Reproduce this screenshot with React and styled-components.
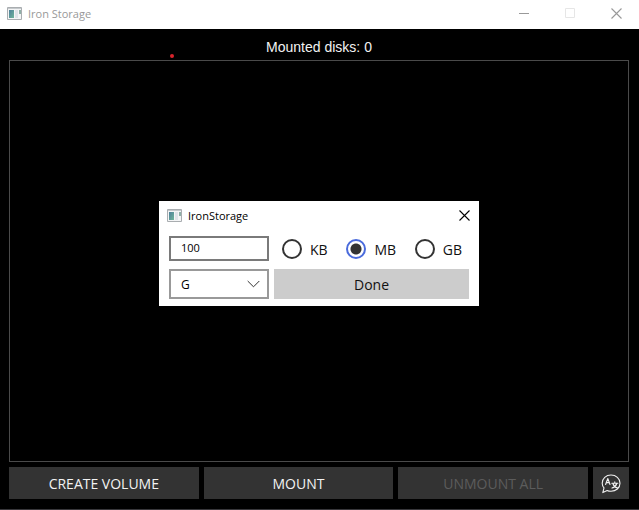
import React, { useState } from "react";
import styled, { createGlobalStyle } from "styled-components";

const GlobalStyle = createGlobalStyle`
  *, *::before, *::after { box-sizing: border-box; }
  body { margin: 0; background: #000; font-family: "Open Sans", "Noto Sans", sans-serif; }
  button, input, select { font-family: inherit; }
`;

const Window = styled.div`
  position: relative;
  display: flex;
  flex-direction: column;
  min-height: 100vh;
  background: #000;
  border-bottom: 1px solid #38373b;
`;

const TitleBar = styled.header`
  display: flex;
  align-items: center;
  height: ${(p) => (p.$dialog ? 28 : 29)}px;
  padding: ${(p) => (p.$dialog ? "0 9px 0 8px" : "0 0 3px 7px")};
  background: #fff;
  color: ${(p) => (p.$dialog ? "#000" : "#999")};
`;

const Title = styled.h1`
  flex: 1;
  margin: 0 0 0 6px;
  padding-top: 2px;
  font-size: 11px;
  line-height: 16px;
  font-weight: 400;
`;

const CaptionButton = styled.button`
  display: grid;
  place-items: center;
  width: ${(p) => (p.$compact ? 12 : 46)}px;
  height: 26px;
  padding: 0;
  border: 0;
  background: transparent;
  color: inherit;
  &:disabled { color: #e6e6e6; }
`;

const Content = styled.main`
  flex: 1;
  display: flex;
  flex-direction: column;
  padding: 9px 10px 10px 9px;
`;

const Status = styled.p`
  margin: 0 0 4px;
  color: #f2f2f2;
  font: 14px/18px "Liberation Sans", sans-serif;
  text-align: center;
`;

const DiskList = styled.section`
  flex: 1;
  border: 1px solid #4a4a4a;
`;

const Actions = styled.footer`
  display: grid;
  grid-template-columns: repeat(3, 1fr) 36px;
  gap: 5px;
  margin-top: 5px;
`;

const ActionButton = styled.button`
  display: grid;
  place-items: center;
  height: 32px;
  padding: 1px 0 0;
  border: 0;
  background: #333;
  color: #f2f2f2;
  font-size: 14px;
  line-height: 20px;
  &:disabled { color: #5c5c5c; }
`;

const RecordingDot = styled.span`
  position: absolute;
  top: 54px;
  left: 170px;
  width: 4px;
  height: 4px;
  border-radius: 50%;
  background: #d9232b;
`;

const Overlay = styled.div`
  position: fixed;
  inset: 0;
  display: grid;
  place-items: center;
  padding: 0 1px 3px 0;
`;

const Dialog = styled.div`
  width: 320px;
  background: #fff;
  color: #111;
`;

const Form = styled.form`
  display: grid;
  grid-template-columns: 100px 1fr;
  gap: 8px 5px;
  padding: 7px 10px;
`;

const SizeInput = styled.input`
  width: 100%;
  height: 25px;
  padding: 0 10px 3px;
  border: 2px solid #7a7a7a;
  border-radius: 0;
  outline: 0;
  background: #fff;
  color: #000;
  font-size: 11px;
`;

const Units = styled.div`
  display: flex;
  align-items: center;
  justify-content: space-between;
  padding: 0 7px 0 8px;
`;

const UnitLabel = styled.label`
  display: flex;
  align-items: center;
  gap: 8px;
  font-size: 14px;
  line-height: 20px;
`;

const UnitName = styled.span`
  padding-top: 2px;
`;

const Radio = styled.input`
  appearance: none;
  width: 20px;
  height: 20px;
  margin: 0;
  border: 2px solid #333;
  border-radius: 50%;
  background: #fff;
  &:checked {
    border-color: #4a6bdc;
    background: radial-gradient(circle, #333 5px, #fff 6px);
  }
`;

const SelectBox = styled.div`
  display: grid;
  align-items: center;
  & > * { grid-area: 1 / 1; }
  & > svg { justify-self: end; margin-right: 9px; pointer-events: none; }
`;

const DriveSelect = styled.select`
  appearance: none;
  width: 100%;
  height: 30px;
  padding: 0 24px 0 10px;
  border: 2px solid #999;
  border-radius: 0;
  background: #fff;
  color: #000;
  font-size: 12px;
`;

const DoneButton = styled.button`
  height: 30px;
  padding: 2px 0 0;
  border: 0;
  background: #ccc;
  color: #111;
  font-size: 14px;
  line-height: 20px;
`;

function AppIcon() {
  return (
    <svg width="15" height="13" viewBox="0 0 15 13" aria-hidden="true">
      <defs>
        <linearGradient id="pane" x1="0" y1="0" x2="1" y2="1">
          <stop offset="0" stopColor="#4d7f9a" />
          <stop offset="1" stopColor="#6fb59a" />
        </linearGradient>
      </defs>
      <path d="M.5.5h14v12H.5z" fill="#f4f5f6" stroke="#a9adb0" />
      <path d="M1 1.500h13" stroke="#c5c9cc" />
      <path d="M2 3h5v8H2z" fill="url(#pane)" />
      <path d="M8 3h3v8H8z" fill="#dfe3e8" />
      <path d="M12 3h2v4h-2z" fill="#8fb0a8" />
    </svg>
  );
}

function CloseIcon() {
  return (
    <svg width="11" height="11" viewBox="0 0 11 11" fill="none" stroke="currentColor" aria-hidden="true">
      <path d="M.5.5l10 10M10.500.5l-10 10" strokeWidth="1.100" />
    </svg>
  );
}

function TranslateIcon() {
  return (
    <svg width="20" height="20" viewBox="0 0 20 20" fill="none" stroke="#f0f0f0" strokeWidth="1.100" strokeLinecap="round" strokeLinejoin="round" aria-hidden="true">
      <path d="M3 13.800C1.800 12.500 1.200 11 1.200 9.200 1.200 4.500 5 1 10 1s9 3.500 9 8.200-4 8.100-9 8.100c-1.400 0-2.700-.2-3.800-.8L1.800 18.600z" />
      <path d="M4.600 10.500l2.200-6 2.200 6M5.400 8.600h2.900" />
      <path d="M10.800 9.300h6M13.800 7.800v1.500M11.900 9.500c.5 2 2 3.700 4.700 4.600M15.700 9.500c-.5 2-2 3.700-4.700 4.600" />
    </svg>
  );
}

export default function App() {
  const [size, setSize] = useState("100");
  const [unit, setUnit] = useState("MB");

  return (
    <Window>
      <GlobalStyle />
      <TitleBar>
        <AppIcon />
        <Title>Iron Storage</Title>
        <CaptionButton aria-label="Minimize">
          <svg width="10" height="10" stroke="currentColor" aria-hidden="true"><path d="M0 5.500h10" /></svg>
        </CaptionButton>
        <CaptionButton aria-label="Maximize" disabled>
          <svg width="10" height="10" fill="none" stroke="currentColor" aria-hidden="true"><path d="M.5.5h9v9h-9z" /></svg>
        </CaptionButton>
        <CaptionButton aria-label="Close"><CloseIcon /></CaptionButton>
      </TitleBar>
      <Content>
        <Status>Mounted disks: 0</Status>
        <DiskList aria-label="Mounted disks" />
        <Actions>
          <ActionButton>CREATE VOLUME</ActionButton>
          <ActionButton>MOUNT</ActionButton>
          <ActionButton disabled>UNMOUNT ALL</ActionButton>
          <ActionButton aria-label="Language"><TranslateIcon /></ActionButton>
        </Actions>
      </Content>
      <RecordingDot />
      <Overlay>
        <Dialog role="dialog" aria-label="IronStorage">
          <TitleBar as="div" $dialog>
            <AppIcon />
            <Title as="h2">IronStorage</Title>
            <CaptionButton $compact aria-label="Close dialog"><CloseIcon /></CaptionButton>
          </TitleBar>
          <Form onSubmit={(e) => e.preventDefault()}>
            <SizeInput aria-label="Size" value={size} onChange={(e) => setSize(e.target.value)} />
            <Units role="radiogroup" aria-label="Unit">
              {["KB", "MB", "GB"].map((u) => (
                <UnitLabel key={u}>
                  <Radio type="radio" name="unit" value={u} checked={unit === u} onChange={() => setUnit(u)} />
                  <UnitName>{u}</UnitName>
                </UnitLabel>
              ))}
            </Units>
            <SelectBox>
              <DriveSelect aria-label="Drive letter" defaultValue="G">
                <option>G</option>
                <option>H</option>
              </DriveSelect>
              <svg width="13" height="8" viewBox="0 0 13 8" fill="none" stroke="#333" aria-hidden="true">
                <path d="M.7 1l5.800 5.800L12.300 1" />
              </svg>
            </SelectBox>
            <DoneButton type="submit">Done</DoneButton>
          </Form>
        </Dialog>
      </Overlay>
    </Window>
  );
}
